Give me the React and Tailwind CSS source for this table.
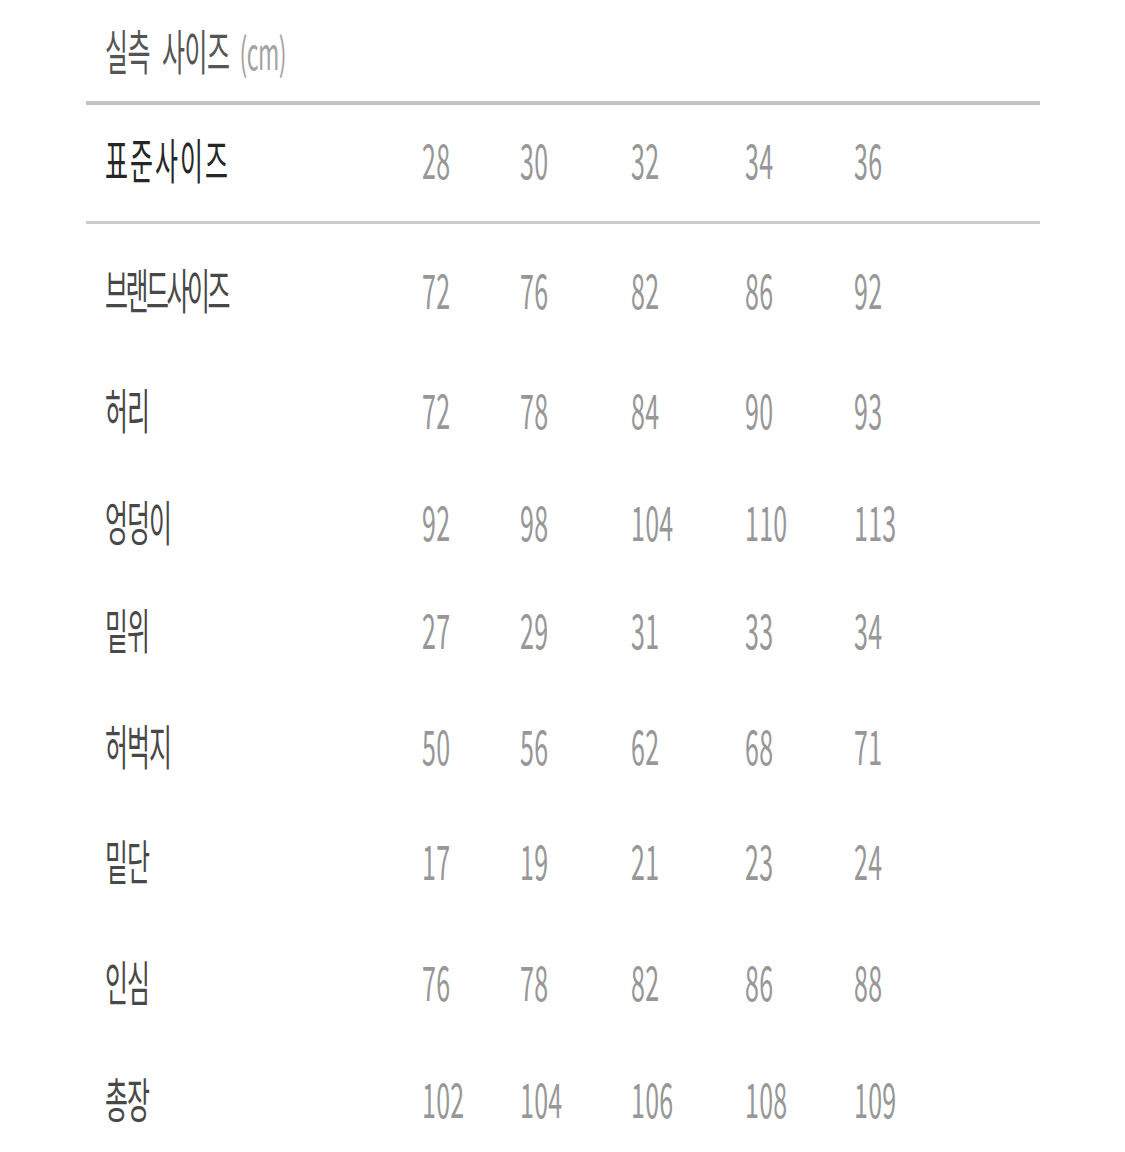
import React from 'react';

const cols = [28, 30, 32, 34, 36];

const rows = [
  { label: '브랜드사이즈', values: [72, 76, 82, 86, 92], h: 'h-[132px] pt-[10px]', track: 'tracking-[-2.5px]' },
  { label: '허리', values: [72, 78, 84, 90, 93], h: 'h-[114px]' },
  { label: '엉덩이', values: [92, 98, 104, 110, 113], h: 'h-[106px]' },
  { label: '밑위', values: [27, 29, 31, 33, 34], h: 'h-[114px]' },
  { label: '허벅지', values: [50, 56, 62, 68, 71], h: 'h-[120px]' },
  { label: '밑단', values: [17, 19, 21, 23, 24], h: 'h-[100px]' },
  { label: '인심', values: [76, 78, 82, 86, 88], h: 'h-[144px] pt-[14px]' },
  { label: '총장', values: [102, 104, 106, 108, 109], h: 'h-[88px] pb-[10px]' },
];

const font = { fontFamily: '"Noto Sans CJK KR", "Noto Sans", sans-serif' };

// the chart is a vertically stretched image, so glyphs are scaled up on y
const Tall = ({ children, className = '' }) => (
  <span className={`block whitespace-nowrap scale-y-[1.9] leading-none ${className}`}>{children}</span>
);

const Row = ({ label, values, h, header, track = 'tracking-[-1px]' }) => (
  <div className={`grid grid-cols-[317px_98px_111px_114px_109px_1fr] items-center pl-[19px] ${h}`}>
    <div className={`text-[25px] ${header ? 'text-[#262626] tracking-[2px]' : `text-[#484848] ${track}`}`}>
      <Tall className="translate-y-[19px]">{label}</Tall>
    </div>
    {values.map((v, i) => (
      <div key={i} className="text-[25px] text-[#979797] tracking-[0.3px]">
        <Tall className="translate-y-[19px]">{v}</Tall>
      </div>
    ))}
    <div />
  </div>
);

export default function App() {
  return (
    <div className="w-[1125px] h-[1152px] bg-white overflow-hidden" style={font}>
      <div className="ml-[86px] w-[954px] flex flex-col">
        <div className="h-[101px] flex items-center pl-[19px]">
          <Tall className="text-[25px] text-[#555] tracking-[-0.5px]">
            실측<span className="inline-block w-[12px]" />사이즈<span className="inline-block w-[10px]" />
            <span className="text-[23px] text-[#a3a3a3] tracking-[-0.5px]">(cm)</span>
          </Tall>
        </div>
        <div className="h-[4px] bg-[#c4c4c4]" />
        <Row label="표준사이즈" values={cols} h="h-[116px]" header />
        <div className="h-[3px] bg-[#cdcdcd]" />
        {rows.map((r) => (
          <Row key={r.label} {...r} />
        ))}
      </div>
    </div>
  );
}
